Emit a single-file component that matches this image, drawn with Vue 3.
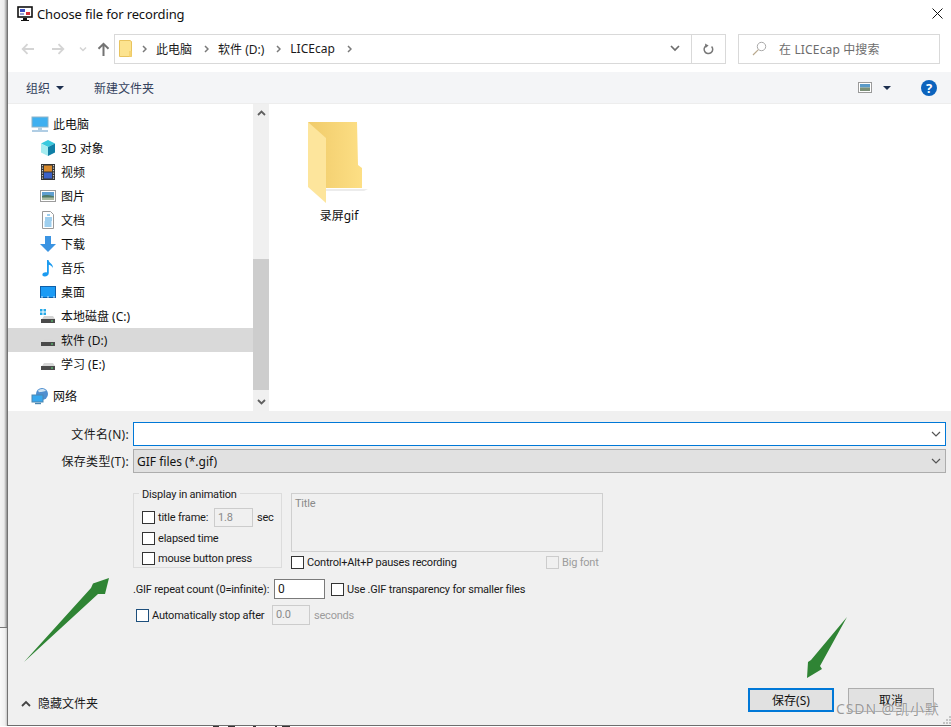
<script setup>
const navItems = [
  { label: '此电脑', icon: 'pc', root: true },
  { label: '3D 对象', icon: 'cube' },
  { label: '视频', icon: 'film' },
  { label: '图片', icon: 'pic' },
  { label: '文档', icon: 'doc' },
  { label: '下载', icon: 'down' },
  { label: '音乐', icon: 'note' },
  { label: '桌面', icon: 'desk' },
  { label: '本地磁盘 (C:)', icon: 'sys' },
  { label: '软件 (D:)', icon: 'disk', selected: true },
  { label: '学习 (E:)', icon: 'disk' },
  { label: '网络', icon: 'net', root: true, gapped: true },
]
const crumbs = ['此电脑', '软件 (D:)', 'LICEcap']
</script>

<template>
  <div class="page">
    <div class="stage">
      <div class="edge">
        <div class="edge-top"></div>
        <div class="edge-bottom"></div>
      </div>
      <div class="dialog">
        <header class="titlebar">
          <svg class="app-icon" width="16" height="16" viewBox="0 0 16 16">
            <rect x="1" y="1" width="14" height="10" fill="#fff" stroke="#111" stroke-width="1.6" />
            <rect x="3" y="3" width="5" height="3" fill="#3b4fc0" />
            <rect x="9" y="6" width="4" height="3" fill="#d8343c" />
            <rect x="3" y="7" width="4" height="2" fill="#9aa4d8" />
            <path d="M6 12h4v2h2v1H4v-1h2z" fill="#111" />
          </svg>
          <span class="title-text">Choose file for recording</span>
          <svg class="close" width="11" height="11" viewBox="0 0 11 11">
            <path d="M.5.5l10 10M10.5.5l-10 10" stroke="#111" stroke-width="1" fill="none" />
          </svg>
        </header>

        <div class="navbar">
          <div class="nav-buttons">
            <svg width="14" height="12" viewBox="0 0 14 12"><path d="M13 6H2M6.5 1.2L1.7 6l4.8 4.8" fill="none" stroke="#d4d4d4" stroke-width="1.8" /></svg>
            <svg class="forward" width="14" height="12" viewBox="0 0 14 12"><path d="M1 6h11M7.5 1.2L12.3 6l-4.8 4.8" fill="none" stroke="#d4d4d4" stroke-width="1.8" /></svg>
            <svg class="hist" width="8" height="6" viewBox="0 0 8 6"><path d="M1 1.5l3 3 3-3" fill="none" stroke="#d4d4d4" stroke-width="1.5" /></svg>
            <svg class="up" width="13" height="14" viewBox="0 0 13 14"><path d="M6.5 14V2M1.5 6.8l5-5 5 5" fill="none" stroke="#737373" stroke-width="2" /></svg>
          </div>
          <div class="address">
            <svg class="addr-folder" width="13" height="17" viewBox="0 0 13 17">
              <path d="M.5.5h10.5l1.5 1v15H.5z" fill="#fce38f" stroke="#e8c35e" />
              <path d="M10 11h2.5v5.5H10z" fill="#f6d474" />
            </svg>
            <div class="crumbs">
              <template v-for="c in crumbs" :key="c">
                <svg class="crumb-sep" width="5" height="8" viewBox="0 0 5 8"><path d="M1 1l3 3-3 3" fill="none" stroke="#7a7a7a" stroke-width="1.5" /></svg>
                <span class="crumb">{{ c }}</span>
              </template>
              <svg class="crumb-sep" width="5" height="8" viewBox="0 0 5 8"><path d="M1 1l3 3-3 3" fill="none" stroke="#7a7a7a" stroke-width="1.5" /></svg>
            </div>
            <svg class="addr-chev" width="10" height="7" viewBox="0 0 10 7"><path d="M1 1l4 4 4-4" fill="none" stroke="#6d6d6d" stroke-width="1.7" /></svg>
            <div class="refresh">
              <svg width="11" height="12" viewBox="0 0 11 12"><path d="M3.2 2.6A4.3 4.3 0 1 0 8.6 3.4" fill="none" stroke="#777" stroke-width="1.5" /><path d="M2 .4l3.6 2.2L2.6 5z" fill="#777" /></svg>
            </div>
          </div>
          <div class="search">
            <svg width="15" height="15" viewBox="0 0 15 15"><circle cx="9.5" cy="5.5" r="4.2" fill="none" stroke="#a9a9a9" /><path d="M6.4 8.6L1 14" stroke="#b9a98e" stroke-width="1.2" /></svg>
            <span>在 LICEcap 中搜索</span>
          </div>
        </div>

        <div class="toolbar">
          <span class="tool">组织</span>
          <i class="caret"></i>
          <span class="tool new-folder">新建文件夹</span>
          <svg class="view-icon" width="14" height="11" viewBox="0 0 14 11">
            <rect x=".5" y=".5" width="13" height="10" fill="#fff" stroke="#9a9a9a" />
            <rect x="2" y="2" width="10" height="3.5" fill="#5a9ac8" />
            <rect x="2" y="5.5" width="10" height="3.5" fill="#7b8f77" />
          </svg>
          <i class="caret view-caret"></i>
          <span class="help">?</span>
        </div>

        <div class="browser">
          <nav class="tree">
            <div
              v-for="n in navItems"
              :key="n.label"
              class="tree-item"
              :class="{ root: n.root, selected: n.selected, gapped: n.gapped }"
            >
              <svg class="tree-icon" width="18" height="18" viewBox="0 0 18 18">
                <g v-if="n.icon === 'pc'">
                  <rect x="1" y="2" width="16" height="10" fill="#3fb0f0" stroke="#8fb3c7" />
                  <path d="M7 12.5h4V15H7z" fill="#b3cfe0" />
                  <path d="M1 16h16" stroke="#8fb8d8" stroke-width="1.4" />
                </g>
                <g v-else-if="n.icon === 'cube'">
                  <path d="M9 1l7 3.5-7 3.5-7-3.5z" fill="#38c9de" />
                  <path d="M2 4.5L9 8v9l-7-3.5z" fill="#a5ecf0" />
                  <path d="M16 4.5L9 8v9l7-3.5z" fill="#0f7fa6" />
                </g>
                <g v-else-if="n.icon === 'film'">
                  <rect x="2" y="1" width="14" height="16" fill="#333" />
                  <rect x="5" y="2.5" width="8" height="6" fill="#d88a2c" />
                  <rect x="5" y="9.5" width="8" height="6" fill="#3c62c8" />
                  <path d="M3.5 2v14M14.5 2v14" stroke="#ccc" stroke-width="1.2" stroke-dasharray="1.2 1.3" />
                </g>
                <g v-else-if="n.icon === 'pic'">
                  <rect x="1.5" y="3.5" width="15" height="11" fill="#fff" stroke="#9c9c9c" />
                  <rect x="3" y="5" width="12" height="4" fill="#5f9fd0" />
                  <rect x="3" y="9" width="12" height="4" fill="#a9b9a0" />
                  <path d="M3 9c3-1.6 6-1 12 .2V10.5H3z" fill="#4f7a68" />
                </g>
                <g v-else-if="n.icon === 'doc'">
                  <path d="M3.5.5h8l3 3v14h-11z" fill="#fff" stroke="#9a9a9a" />
                  <path d="M8 4h3M6 7h7M6 9h7M5.5 11h7M5.5 13h7M5.5 15h7" stroke="#3f9fde" />
                </g>
                <path v-else-if="n.icon === 'down'" d="M6 1h6v8h5l-8 8-8-8h5z" fill="#3b94e2" />
                <path v-else-if="n.icon === 'note'" d="M8 1h1.5c.4 3 4.5 3.5 4.5 8-1-2-3-3-4.200-3.200v8.200c0 2.200-2 3.500-4 3.500S3 16.500 3.500 15c.5-1.500 3-2.300 4.500-1.500z" fill="#1b9bf0" />
                <g v-else-if="n.icon === 'desk'">
                  <rect x="1.5" y="3.5" width="15" height="11" fill="#1b9bf5" stroke="#0f5fa8" />
                  <path d="M2 14h14" stroke="#cfe8fb" stroke-dasharray="2 4" />
                </g>
                <g v-else-if="n.icon === 'sys'">
                  <path d="M1 2h2.500v2.500H1zM4.500 2H7v2.500H4.500zM1 5.500h2.500V8H1zM4.500 5.500H7V8H4.500z" fill="#27a9e8" />
                  <path d="M3 12l2-3h9l2 3z" fill="#d4d4d4" />
                  <rect x="2" y="12" width="14" height="4" fill="#4a4a4a" />
                  <rect x="12" y="13.5" width="2" height="1" fill="#5fdc7a" />
                </g>
                <g v-else-if="n.icon === 'disk'">
                  <path d="M3 11l2-3h9l2 3z" fill="#d8d8d8" />
                  <rect x="2" y="11" width="14" height="4" fill="#4a4a4a" />
                  <rect x="12" y="12.5" width="2" height="1" fill="#5fdc7a" />
                </g>
                <g v-else>
                  <circle cx="11" cy="7" r="6" fill="#4f8fd0" />
                  <path d="M7 3.500c3-2 6-2 8 .5-2 0-3 1-5 1s-2 1-3-1.500z" fill="#cfe3f2" />
                  <rect x="1" y="8" width="11" height="7" fill="#38a8ee" stroke="#4b86b0" />
                  <path d="M4 16.500h6" stroke="#4b86b0" stroke-width="1.4" />
                </g>
              </svg>
              <span>{{ n.label }}</span>
            </div>
          </nav>
          <div class="scrollbar">
            <svg class="scroll-arrow" width="9" height="6" viewBox="0 0 9 6"><path d="M1 5l3.500-3.500L8 5" fill="none" stroke="#606060" stroke-width="1.8" /></svg>
            <div class="thumb"></div>
            <svg class="scroll-arrow" width="9" height="6" viewBox="0 0 9 6"><path d="M1 1l3.500 3.500L8 1" fill="none" stroke="#606060" stroke-width="1.8" /></svg>
          </div>
          <main class="files">
            <div class="file">
              <svg width="70" height="90" viewBox="0 0 70 90">
                <defs>
                  <linearGradient id="back" x1="0" x2="1" y1="0" y2="0">
                    <stop offset="0" stop-color="#f0cb6a" />
                    <stop offset="1" stop-color="#fddf85" />
                  </linearGradient>
                </defs>
                <path d="M22 73h42l-4 2H22z" fill="#ececec" />
                <path d="M4 6h49l1 43 4 3v20H22z" fill="url(#back)" />
                <path d="M4 6l18 16v65L4 71z" fill="#fde59c" />
              </svg>
              <span>录屏gif</span>
            </div>
          </main>
        </div>

        <div class="form">
          <div class="field">
            <label>文件名(N):</label>
            <div class="combo focused">
              <svg width="10" height="6" viewBox="0 0 10 6"><path d="M1 1l4 4 4-4" fill="none" stroke="#555" stroke-width="1.2" /></svg>
            </div>
          </div>
          <div class="field second">
            <label>保存类型(T):</label>
            <div class="combo readonly">
              <span>GIF files (*.gif)</span>
              <svg width="10" height="6" viewBox="0 0 10 6"><path d="M1 1l4 4 4-4" fill="none" stroke="#555" stroke-width="1.2" /></svg>
            </div>
          </div>

          <div class="options">
            <div class="opts-top">
              <div class="group">
                <span class="legend">Display in animation</span>
                <div class="opt first">
                  <i class="check"></i><span class="opt-label frame-label">title frame:</span>
                  <span class="mini">1.8</span><span class="unit">sec</span>
                </div>
                <div class="opt"><i class="check"></i><span class="opt-label">elapsed time</span></div>
                <div class="opt"><i class="check"></i><span class="opt-label">mouse button press</span></div>
              </div>
              <div class="title-col">
                <div class="title-box">Title</div>
                <div class="ctrl-row">
                  <i class="check"></i><span class="opt-label">Control+Alt+P pauses recording</span>
                  <i class="check off big"></i><span class="opt-label muted big-label">Big font</span>
                </div>
              </div>
            </div>
            <div class="repeat-row">
              <span class="repeat-label">.GIF repeat count (0=infinite):</span>
              <span class="repeat-input">0</span>
              <i class="check"></i><span class="opt-label">Use .GIF transparency for smaller files</span>
            </div>
            <div class="stop-row">
              <i class="check blue"></i><span class="opt-label stop-label">Automatically stop after</span>
              <span class="mini wide">0.0</span><span class="unit muted">seconds</span>
            </div>
          </div>

          <footer class="footer">
            <div class="hide">
              <svg width="10" height="7" viewBox="0 0 10 7"><path d="M1 6l4-4 4 4" fill="none" stroke="#444" stroke-width="1.8" /></svg>
              <span>隐藏文件夹</span>
            </div>
            <button class="btn primary">保存(S)</button>
            <button class="btn">取消</button>
          </footer>
          <svg class="grip" width="8" height="8" viewBox="0 0 8 8">
            <path d="M6 0h2v2H6zM3 3h2v2H3zM6 3h2v2H6zM0 6h2v2H0zM3 6h2v2H3zM6 6h2v2H6z" fill="#c4c4c4" />
          </svg>
        </div>
      </div>
    </div>
    <svg class="under" width="951" height="1" viewBox="0 0 951 1">
      <path d="M213 0h6v1h-6zM228 0h7v1h-7zM253 0h3v1h-3zM275 0h2v1h-2zM282 0h8v1h-8z" fill="#333" />
    </svg>

    <svg class="arrows" width="951" height="727" viewBox="0 0 951 727">
      <path d="M109 578L93 583.5 91 588 24 662 98 594 105 594z" fill="#2f8434" />
      <path d="M847 617L811 660 808 662 807 678 822 669 820 666z" fill="#2f8434" />
    </svg>
    <div class="watermark">CSDN @凯小默</div>
  </div>
</template>

<style scoped>
.page {
  position: relative;
  width: 951px;
  height: 727px;
  overflow: hidden;
  background: #fff;
  font-family: "Noto Sans", "Noto Sans CJK SC", sans-serif;
  font-size: 12px;
  color: #111;
}
.stage { display: flex; height: 726px; }
.under { display: block; }
.edge { width: 7px; display: flex; flex-direction: column; }
.edge-top {
  height: 627px;
  background: linear-gradient(90deg, #f2f2f2 0, #ececec 4px, #b0b0b0 6px, #8a8a8a 7px);
  border-bottom: 1px solid #777;
}
.edge-bottom { flex: 1; background: linear-gradient(90deg, #fafafa 0, #f0f0f0 5px, #c8c8c8 7px); }
.dialog {
  flex: 1;
  display: flex;
  flex-direction: column;
  border-left: 1px solid #737373;
  border-bottom: 1px solid #6e6e6e;
  background: #fff;
  min-width: 0;
}

.titlebar { height: 27px; display: flex; align-items: center; padding-left: 9px; flex: none; }
.app-icon { margin-right: 4px; }
.title-text { font-size: 13px; letter-spacing: -0.14px; }
.close { margin-left: auto; margin-right: 8px; }

.navbar { height: 45px; display: flex; align-items: center; flex: none; padding-bottom: 2px; box-sizing: border-box; }
.nav-buttons { width: 106px; display: flex; align-items: center; padding-left: 13px; box-sizing: border-box; }
.forward { margin-left: 16px; }
.hist { margin-left: 14px; }
.up { margin-left: 10px; }
.address {
  width: 612px;
  height: 30px;
  box-sizing: border-box;
  border: 1px solid #d9d9d9;
  display: flex;
  align-items: center;
}
.addr-folder { margin-left: 4px; }
.crumbs { display: flex; align-items: center; flex: 1; padding-left: 10px; }
.crumb-sep { flex: none; }
.crumb { padding: 0 12px 0 9px; color: #1a1a1a; }
.addr-chev { margin-right: 11px; }
.refresh {
  width: 33px;
  height: 28px;
  border-left: 1px solid #d9d9d9;
  display: flex;
  align-items: center;
  justify-content: center;
}
.search {
  width: 202px;
  height: 30px;
  box-sizing: border-box;
  margin-left: 12px;
  border: 1px solid #d9d9d9;
  display: flex;
  align-items: center;
  padding-left: 13px;
  color: #6d6d6d;
}
.search span { margin-left: 12px; letter-spacing: 0.15px; }

.toolbar {
  height: 31px;
  flex: none;
  background: #f4f5f7;
  border-bottom: 1px solid #ededed;
  display: flex;
  align-items: center;
  padding-left: 18px;
}
.tool { color: #33415c; }
.caret {
  display: block;
  margin-left: 6px;
  border-left: 4px solid transparent;
  border-right: 4px solid transparent;
  border-top: 4px solid #1c2f4f;
}
.new-folder { margin-left: 30px; }
.view-icon { margin-left: auto; }
.view-caret { margin-left: 11px; }
.help {
  width: 16px;
  height: 16px;
  margin: 0 14px 0 30px;
  border-radius: 50%;
  background: #0c63bd;
  color: #fff;
  font-weight: 700;
  font-size: 13px;
  line-height: 16px;
  text-align: center;
}

.browser { height: 307px; flex: none; display: flex; }
.tree { width: 245px; padding-top: 8px; box-sizing: border-box; }
.tree-item { height: 24px; display: flex; align-items: center; padding-left: 31px; color: #111; }
.tree-item.root { padding-left: 23px; }
.tree-item.gapped { margin-top: 8px; }
.tree-item.selected { background: #d9d9d9; }
.tree-icon { margin-right: 4px; flex: none; }
.scrollbar {
  width: 16px;
  background: #f0f0f0;
  display: flex;
  flex-direction: column;
  align-items: center;
  padding-top: 6px;
  box-sizing: border-box;
}
.scroll-arrow { flex: none; }
.thumb { width: 16px; height: 131px; background: #cdcdcd; margin: 143px 0 9px; flex: none; }
.files { flex: 1; padding: 12px 0 0 35px; box-sizing: border-box; }
.file { width: 70px; display: flex; flex-direction: column; align-items: center; }
.file span { line-height: 20px; color: #111; }

.form {
  position: relative;
  flex: 1;
  background: #f0f0f0;
  padding-top: 11px;
  display: flex;
  flex-direction: column;
  min-height: 0;
}
.field { display: flex; align-items: center; height: 24px; margin-right: 5px; }
.field.second { margin-top: 3px; }
.field label { width: 121px; text-align: right; margin-right: 4px; color: #1a1a1a; letter-spacing: 0.3px; white-space: nowrap; }
.combo {
  flex: 1;
  height: 24px;
  box-sizing: border-box;
  display: flex;
  align-items: center;
  padding: 0 3px;
}
.combo svg { margin-left: auto; margin-right: 1px; }
.combo.focused { background: #fff; border: 1px solid #0078d7; }
.combo.readonly { background: #e1e1e1; border: 1px solid #adadad; color: #111; }

.options {
  margin: 20px 0 0 125px;
  font-family: Roboto, "Liberation Sans", sans-serif;
  font-size: 11px;
  letter-spacing: -0.2px;
  color: #1a1a1a;
}
.opts-top { display: flex; }
.group {
  position: relative;
  width: 149px;
  height: 75px;
  box-sizing: border-box;
  border: 1px solid #dcdcdc;
  padding: 13px 0 0 8px;
}
.legend {
  position: absolute;
  left: 5px;
  top: -6px;
  padding: 0 3px;
  line-height: 13px;
  background: #f0f0f0;
}
.opt { height: 20px; display: flex; align-items: center; }
.opt.first { margin-bottom: 1px; }
.check {
  display: block;
  flex: none;
  width: 13px;
  height: 13px;
  box-sizing: border-box;
  background: #fff;
  border: 1px solid #333;
}
.check.off { border-color: #ccc; background: #f0f0f0; }
.check.blue { border-color: #1d4f7c; }
.opt-label { margin-left: 3px; white-space: nowrap; }
.frame-label { width: 53px; }
.mini {
  box-sizing: border-box;
  width: 39px;
  height: 19px;
  margin-left: 3px;
  padding-left: 3px;
  border: 1px solid #ccc;
  line-height: 17px;
  color: #8a8a8a;
}
.unit { margin-left: 4px; }
.muted { color: #9c9c9c; }
.title-col { margin-left: 9px; width: 312px; }
.title-box {
  height: 59px;
  box-sizing: border-box;
  border: 1px solid #cfcfcf;
  padding: 2px 3px;
  color: #8a8a8a;
  line-height: 15px;
}
.ctrl-row { display: flex; align-items: center; height: 13px; margin-top: 4px; }
.check.big { margin-left: auto; }
.big-label { width: 41px; }
.repeat-row { display: flex; align-items: center; margin-top: 10px; height: 20px; }
.repeat-label { width: 137px; white-space: nowrap; }
.repeat-input {
  box-sizing: border-box;
  width: 51px;
  height: 20px;
  margin: 0 6px 0 4px;
  padding-left: 3px;
  background: #fff;
  border: 1px solid #7a7a7a;
  line-height: 18px;
  font-size: 12px;
}
.stop-row { display: flex; align-items: center; height: 20px; margin-top: 6px; padding-left: 3px; }
.stop-label { width: 120px; }
.mini.wide { margin-left: 0; width: 38px; height: 20px; line-height: 18px; }

.footer { margin-top: auto; display: flex; align-items: center; height: 24px; margin-bottom: 13px; padding-left: 13px; }
.hide { display: flex; align-items: center; margin-right: auto; margin-top: 6px; color: #1a1a1a; }
.hide span { margin-left: 7px; }
.btn {
  width: 86px;
  height: 24px;
  box-sizing: border-box;
  border: 1px solid #adadad;
  background: #e1e1e1;
  font: inherit;
  color: #111;
  padding: 0;
  margin-right: 17px;
}
.btn.primary { border: 2px solid #0078d7; margin-right: 14px; }
.grip { position: absolute; right: 0; bottom: 1px; }

.arrows { position: absolute; left: 0; top: 0; pointer-events: none; }
.watermark {
  position: absolute;
  left: 836px;
  top: 700px;
  font-size: 14px;
  line-height: 18px;
  letter-spacing: 0.9px;
  color: rgba(120, 120, 120, 0.75);
  text-shadow: 0 0 1px #fff;
  white-space: nowrap;
}
</style>
